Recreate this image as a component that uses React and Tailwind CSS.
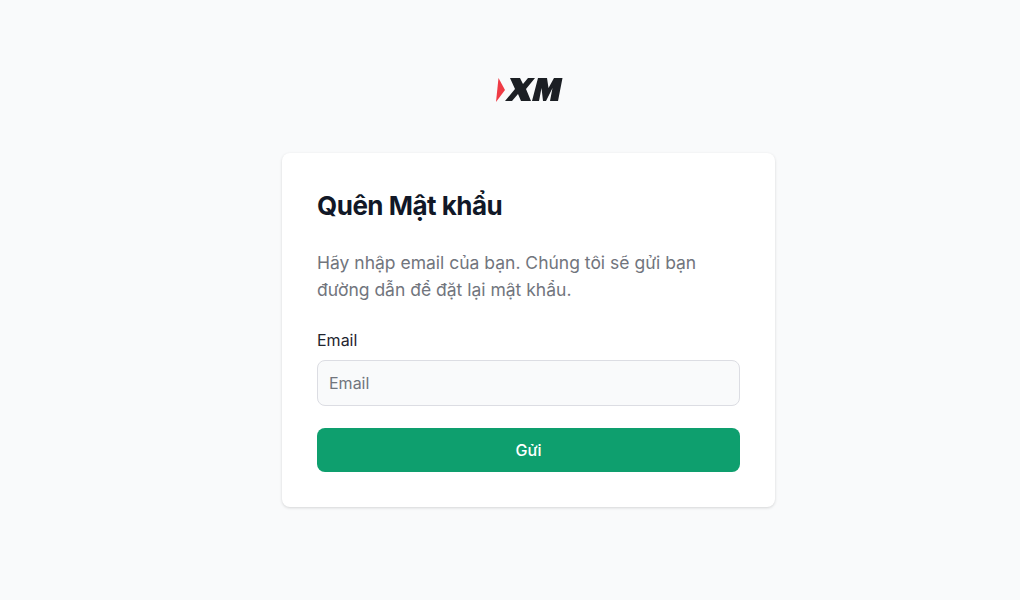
function Logo() {
  return (
    <svg width="70" height="28" viewBox="0 0 70 28" className="block">
      <path d="M4.5 2 L11 14 L2 26 Z" fill="#ef3b45" />
      <path d="M16 2 H26 L29 8 L34 2 H41 L32 13 L37 25 H27 L24 18 L18 25 H11 L21 13 Z" fill="#1c1f24" />
      <path d="M38 25 L44 2 H53 L54.5 12 L60 2 H68.5 L64 25 H56 L58.5 12 L52 25 H49 L47.5 12 L45 25 Z" fill="#1c1f24" />
    </svg>
  )
}

export default function App() {
  return (
    <div className="min-h-screen bg-[#f9fafb] flex flex-col items-center pl-[37px] pt-[76px] font-['Inter',sans-serif]">
      <Logo />
      <div className="mt-[49px] w-[493px] bg-white rounded-lg shadow-[0_1px_3px_rgba(0,0,0,0.15)] p-[35px]">
        <h1 className="text-[26px] leading-[36px] font-bold tracking-[-0.5px] text-[#111827]">Quên Mật khẩu</h1>
        <p className="mt-[25px] text-[17.5px] leading-[27px] text-[#71757d]">
          Hãy nhập email của bạn. Chúng tôi sẽ gửi bạn đường dẫn để đặt lại mật khẩu.
        </p>
        <form>
          <label htmlFor="email" className="block mt-[25px] mb-[8px] text-base leading-6 text-[#1f2530]">Email</label>
          <input
            id="email"
            type="text"
            placeholder="Email"
            className="w-full h-[46px] px-[11px] bg-[#f9fafb] border border-[#dcdde3] rounded-lg text-base placeholder:text-[#71757d]"
          />
          <button type="button" className="block w-full h-[44px] mt-[22px] bg-[#0e9f6e] rounded-lg text-white text-base font-medium">Gửi</button>
        </form>
      </div>
    </div>
  )
}
